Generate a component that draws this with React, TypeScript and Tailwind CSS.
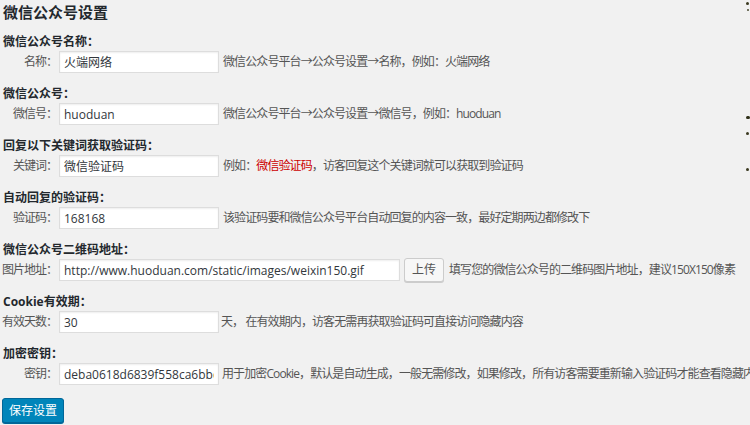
import React from "react";

const font = { fontFamily: '"Open Sans", "Noto Sans CJK SC", sans-serif' };

function Section({
  title,
  label,
  value,
  inputW = "w-[160px]",
  children,
}: {
  title: React.ReactNode;
  label: string;
  value: string;
  inputW?: string;
  children?: React.ReactNode;
}) {
  return (
    <div className="mb-[12px]">
      <div className="h-[18px] text-[12px] font-bold leading-[18px] text-[#23282d]">{title}</div>
      <div className="flex h-[22px] items-center whitespace-nowrap">
        <div className="flex w-[54px] shrink-0 justify-end text-[12px] tracking-[-1px] text-[#555]">
          <span className="shrink-0">{label}</span>
        </div>
        <input
          readOnly
          value={value}
          className={`${inputW} ml-[2px] h-[22px] shrink-0 border border-[#dddddd] bg-white px-[4px] text-[12px] text-[#32373c] shadow-[inset_0_1px_2px_rgba(0,0,0,0.07)] outline-none`}
          style={font}
        />
        {children}
      </div>
    </div>
  );
}

const help = "text-[12px] tracking-[-0.9px] text-[#555]";

export default function App() {
  return (
    <div
      className="relative h-[425px] w-[750px] overflow-hidden bg-[#f1f1f1] pl-[3px] text-[#555]"
      style={font}
    >
      <h1 className="m-0 h-[24px] text-[15px] font-bold leading-[24px] text-[#23282d]">微信公众号设置</h1>
      <div className="mt-[9px]">
        <Section title="微信公众号名称：" label="名称：" value="火端网络">
          <span className={`ml-[4px] ${help}`}>微信公众号平台→公众号设置→名称，例如：火端网络</span>
        </Section>
        <Section title="微信公众号：" label="微信号：" value="huoduan">
          <span className={`ml-[4px] ${help}`}>微信公众号平台→公众号设置→微信号，例如：huoduan</span>
        </Section>
        <Section title="回复以下关键词获取验证码：" label="关键词：" value="微信验证码">
          <span className={`ml-[4px] ${help}`}>
            例如：<span className="text-[#c00]">微信验证码</span>，访客回复这个关键词就可以获取到验证码
          </span>
        </Section>
        <Section title="自动回复的验证码：" label="验证码：" value="168168">
          <span className={`ml-[4px] ${help}`}>该验证码要和微信公众号平台自动回复的内容一致，最好定期两边都修改下</span>
        </Section>
        <Section
          title="微信公众号二维码地址："
          label="图片地址："
          value="http://www.huoduan.com/static/images/weixin150.gif"
          inputW="w-[341px]"
        >
          <button className="ml-[4px] h-[24px] shrink-0 rounded-[3px] border border-[#cccccc] bg-[#f7f7f7] px-[7px] text-[12px] leading-[22px] text-[#555] shadow-[0_1px_0_#cccccc]">
            上传
          </button>
          <span className={`ml-[5px] ${help}`}>填写您的微信公众号的二维码图片地址，建议150X150像素</span>
        </Section>
        <Section title="Cookie有效期：" label="有效天数：" value="30">
          <span className={`ml-[2px] ${help}`}>天， 在有效期内，访客无需再获取验证码可直接访问隐藏内容</span>
        </Section>
        <Section title="加密密钥：" label="密钥：" value="deba0618d6839f558ca6bbd1f2e6a0c4">
          <span className={`ml-[3px] ${help}`}>
            用于加密Cookie，默认是自动生成，一般无需修改，如果修改，所有访客需要重新输入验证码才能查看隐藏内容
          </span>
        </Section>
        <button className="-ml-[1px] mt-[1px] h-[25px] rounded-[3px] border border-[#006799] bg-[#0085ba] px-[6px] text-[12px] leading-[23px] text-white shadow-[0_1px_0_#006799]">
          保存设置
        </button>
      </div>
      <span className="absolute left-[746px] top-[2px] h-[3px] w-[3px] rounded-full bg-[#3b3a20]" />
      <span className="absolute left-[747px] top-[9px] h-[2px] w-[2px] rounded-full bg-[#4a4a30]" />
      <span className="absolute left-[746px] top-[116px] h-[3px] w-[4px] rounded-full bg-[#2f3018]" />
      <span className="absolute left-[746px] top-[132px] h-[3px] w-[3px] rounded-full bg-[#3b3a20]" />
      <span className="absolute left-[746px] top-[168px] h-[3px] w-[3px] rounded-full bg-[#3b3a20]" />
    </div>
  );
}
